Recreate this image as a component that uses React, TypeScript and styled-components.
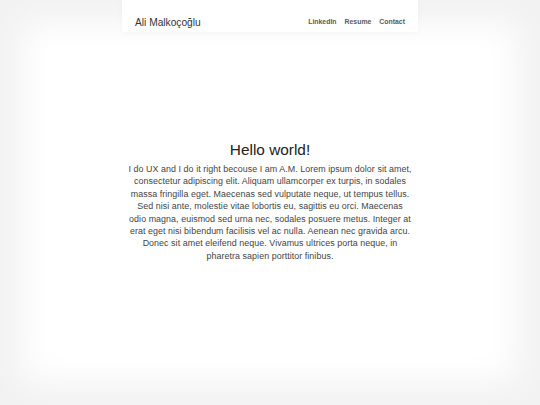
import React from "react";
import styled, { createGlobalStyle } from "styled-components";

const GlobalStyle = createGlobalStyle`
  html, body {
    margin: 0;
    padding: 0;
    height: 100%;
  }
  body {
    font-family: "Liberation Sans", Arial, sans-serif;
    background: #fff;
  }
  #root {
    height: 100%;
  }
`;

const links = ["LinkedIn", "Resume", "Contact"];

export default function App() {
  return (
    <>
      <GlobalStyle />
      <Page>
        <Header>
          <Name>Ali Malkoçoğlu</Name>
          <Nav>
            {links.map(l => (
              <NavLink key={l} href="#">
                {l}
              </NavLink>
            ))}
          </Nav>
        </Header>
        <Main>
          <Intro>
            <Title>Hello world!</Title>
            <Text>
              I do UX and I do it right becouse I am A.M. Lorem ipsum dolor sit
              amet, consectetur adipiscing elit. Aliquam ullamcorper ex turpis,
              in sodales massa fringilla eget. Maecenas sed vulputate neque, ut
              tempus tellus. Sed nisi ante, molestie vitae lobortis eu, sagittis
              eu orci. Maecenas odio magna, euismod sed urna nec, sodales posuere
              metus. Integer at erat eget nisi bibendum facilisis vel ac nulla.
              Aenean nec gravida arcu. Donec sit amet eleifend neque. Vivamus
              ultrices porta neque, in pharetra sapien porttitor finibus.
            </Text>
          </Intro>
        </Main>
      </Page>
    </>
  );
}

const Page = styled.div`
  height: 100%;
  display: flex;
  flex-direction: column;
  align-items: center;
  background: #fff;
  box-shadow: inset 0 0 34px 22px #f2f2f2;
`;

const Header = styled.header`
  width: 296px;
  height: 32px;
  box-sizing: border-box;
  padding: 0 13px 4px 13px;
  display: flex;
  align-items: flex-end;
  justify-content: space-between;
  background: #fff;
  box-shadow: 0 1px 6px rgba(0, 0, 0, 0.03);
`;

const Name = styled.div`
  font-size: 10.2px;
  color: #333;
`;

const Nav = styled.nav`
  display: flex;
  gap: 8px;
  padding-bottom: 3px;
`;

const NavLink = styled.a`
  font-size: 6.9px;
  font-weight: bold;
  color: #5a5a5a;
  text-decoration: none;
`;

const Main = styled.main`
  flex: 1;
  display: flex;
  align-items: center;
  justify-content: center;
  padding-bottom: 34px;
`;

const Intro = styled.section`
  width: 284px;
  text-align: center;
`;

const Title = styled.h1`
  margin: 0 0 4px;
  font-size: 15.4px;
  font-weight: normal;
  color: #222;
`;

const Text = styled.p`
  margin: 0;
  font-size: 8.9px;
  line-height: 12.4px;
  letter-spacing: 0.06px;
  color: #444;
`;
